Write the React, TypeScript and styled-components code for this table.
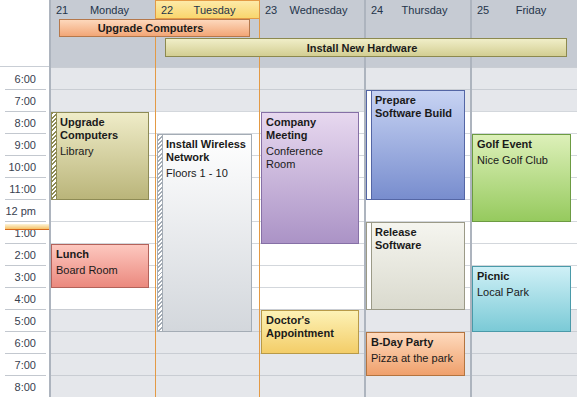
import React from 'react';
import styled, { createGlobalStyle, css } from 'styled-components';

const GlobalStyle = createGlobalStyle`
  html, body {
    margin: 0;
    padding: 0;
    background: #ffffff;
  }
  body {
    font-family: "Liberation Sans", Arial, sans-serif;
  }
`;

const GRID_COLS = '104px 105px 104px 106px 107px';
const HEADER_BG = '#c6cbd3';
const RAIL = '#adb4be';
const TODAY = '#e39a45';

type Edge = 'none' | 'grey' | 'today';

interface Day {
  num: string;
  name: string;
  edge: Edge;
  inset: number;
  evLeft: number;
  evRight: number;
  today?: boolean;
}

interface Tone {
  top: string;
  bottom: string;
  border: string;
}

interface CalEvent {
  day: number;
  start: number;
  end: number;
  title: string;
  location?: string;
  tone: Tone;
  strip?: 'hatch' | 'free';
}

const days: Day[] = [
  { num: '21', name: 'Monday', edge: 'none', inset: 0, evLeft: 0, evRight: 6 },
  { num: '22', name: 'Tuesday', edge: 'today', inset: 1, evLeft: 2, evRight: 8, today: true },
  { num: '23', name: 'Wednesday', edge: 'none', inset: 0, evLeft: 1, evRight: 5 },
  { num: '24', name: 'Thursday', edge: 'grey', inset: 2, evLeft: 2, evRight: 5 },
  { num: '25', name: 'Friday', edge: 'grey', inset: 2, evLeft: 2, evRight: 6 },
];

const hours = ['6:00', '7:00', '8:00', '9:00', '10:00', '11:00', '12 pm', '1:00', '2:00', '3:00', '4:00', '5:00', '6:00', '7:00', '8:00'];

const tones = {
  olive: { top: '#efecc8', bottom: '#bab57a', border: '#8e8b55' },
  red: { top: '#fdc8bf', bottom: '#eb897e', border: '#b3625a' },
  silver: { top: '#ffffff', bottom: '#d3d7dc', border: '#a4acb5' },
  purple: { top: '#e7d8ef', bottom: '#ab93c6', border: '#8670a6' },
  yellow: { top: '#fdf2b6', bottom: '#f3cd68', border: '#b89a48' },
  blue: { top: '#c7d3f3', bottom: '#788dce', border: '#5466a5' },
  beige: { top: '#f5f5ef', bottom: '#dadace', border: '#9b9a87' },
  orange: { top: '#fedabd', bottom: '#efa06c', border: '#b3743f' },
  green: { top: '#ddf0b9', bottom: '#96ca5e', border: '#6c9b42' },
  cyan: { top: '#cff0f6', bottom: '#7bcad6', border: '#4a9aa9' },
  allOrange: { top: '#fdd8bc', bottom: '#f2a676', border: '#b5784b' },
  allOlive: { top: '#f0eec8', bottom: '#d3ce92', border: '#8c894f' },
};

const events: CalEvent[] = [
  { day: 0, start: 2, end: 6, title: 'Upgrade Computers', location: 'Library', tone: tones.olive, strip: 'hatch' },
  { day: 0, start: 8, end: 10, title: 'Lunch', location: 'Board Room', tone: tones.red },
  { day: 1, start: 3, end: 12, title: 'Install Wireless Network', location: 'Floors 1 - 10', tone: tones.silver, strip: 'hatch' },
  { day: 2, start: 2, end: 8, title: 'Company Meeting', location: 'Conference Room', tone: tones.purple },
  { day: 2, start: 11, end: 13, title: "Doctor's Appointment", tone: tones.yellow },
  { day: 3, start: 1, end: 6, title: 'Prepare Software Build', tone: tones.blue, strip: 'free' },
  { day: 3, start: 7, end: 11, title: 'Release Software', tone: tones.beige, strip: 'free' },
  { day: 3, start: 12, end: 14, title: 'B-Day Party', location: 'Pizza at the park', tone: tones.orange },
  { day: 4, start: 3, end: 7, title: 'Golf Event', location: 'Nice Golf Club', tone: tones.green },
  { day: 4, start: 9, end: 12, title: 'Picnic', location: 'Local Park', tone: tones.cyan },
];

const isWorkHour = (i: number) => i >= 2 && i <= 10;

const Calendar = styled.div`
  width: 577px;
  height: 398px;
  overflow: hidden;
  display: grid;
  grid-template-columns: 51px ${GRID_COLS};
  grid-template-rows: 19px 48px repeat(15, 22px);
  font-size: 11px;
  color: #1b1b1b;
  background: #ffffff;
`;

const Corner = styled.div`
  grid-column: 1;
  grid-row: 1 / 3;
  border-bottom: 1px solid #c9ced5;
`;

const TimeRail = styled.div`
  grid-column: 1;
  grid-row: 1 / -1;
  border-right: 2px solid ${RAIL};
`;

const TimeCell = styled.div<{ $row: number; $first: boolean }>`
  grid-column: 1;
  grid-row: ${(p) => p.$row};
  margin: 0 5px;
  position: relative;
  display: flex;
  align-items: center;
  justify-content: flex-end;
  padding-right: 10px;
  border-top: 1px solid ${(p) => (p.$first ? 'transparent' : '#c3c8cf')};
  color: #38414f;
`;

const NowMarker = styled.div`
  position: absolute;
  left: 0;
  right: -3px;
  top: 2px;
  height: 6px;
  background: linear-gradient(to bottom, #fdf4d8 0, #f6c773 4.5px, #d8691c 4.5px, #d8691c 6px);
`;

const HeaderCell = styled.div<{ $col: number; $today?: boolean; $inset: number }>`
  grid-column: ${(p) => p.$col};
  grid-row: 1;
  display: flex;
  align-items: center;
  padding-left: ${(p) => 5 + p.$inset}px;
  color: #24344a;
  background: ${HEADER_BG};
  ${(p) =>
    p.$today &&
    css`
      background: linear-gradient(to bottom, #fdeaa8, #f9d66d);
      border-top: 1px solid ${TODAY};
      border-bottom: 1px solid ${TODAY};
    `}
`;

const DayNum = styled.span`
  width: 12px;
  flex-shrink: 0;
`;

const DayName = styled.span`
  flex: 1;
  text-align: center;
  padding-right: 4px;
`;

const AllDayCell = styled.div<{ $col: number }>`
  grid-column: ${(p) => p.$col};
  grid-row: 2;
  background: ${HEADER_BG};
`;

const Slot = styled.div<{ $col: number; $row: number; $work: boolean }>`
  grid-column: ${(p) => p.$col};
  grid-row: ${(p) => p.$row};
  background: ${(p) => (p.$work ? '#ffffff' : '#e5e7eb')};
  border-top: 1px solid ${(p) => (p.$work ? '#d3d7dc' : '#c9cdd3')};
`;

const DayRail = styled.div<{ $col: number; $edge: Edge }>`
  grid-column: ${(p) => p.$col};
  grid-row: 1 / -1;
  ${(p) =>
    p.$edge === 'grey' &&
    css`
      border-left: 2px solid ${RAIL};
    `}
  ${(p) =>
    p.$edge === 'today' &&
    css`
      border-left: 1px solid ${TODAY};
      border-right: 1px solid ${TODAY};
    `}
`;

const AllDayLane = styled.div`
  grid-column: 2 / 7;
  grid-row: 2;
  display: grid;
  grid-template-columns: ${GRID_COLS};
  grid-template-rows: 18px 19px;
  row-gap: 1px;
  align-content: start;
`;

const AllDayBar = styled.div<{ $from: number; $to: number; $row: number; $ml: number; $mr: number; $tone: Tone }>`
  grid-column: ${(p) => p.$from} / ${(p) => p.$to};
  grid-row: ${(p) => p.$row};
  margin: 0 ${(p) => p.$mr}px 0 ${(p) => p.$ml}px;
  padding-right: 8px;
  border: 1px solid ${(p) => p.$tone.border};
  background: linear-gradient(to bottom, ${(p) => p.$tone.top}, ${(p) => p.$tone.bottom});
  display: flex;
  align-items: center;
  justify-content: center;
  font-weight: bold;
  color: #1a1a1a;
`;

const EventBox = styled.div<{ $col: number; $start: number; $end: number; $ml: number; $mr: number; $tone: Tone }>`
  grid-column: ${(p) => p.$col};
  grid-row: ${(p) => p.$start} / ${(p) => p.$end};
  margin: 1px ${(p) => p.$mr}px -1px ${(p) => p.$ml}px;
  display: flex;
  overflow: hidden;
  border: 1px solid ${(p) => p.$tone.border};
  background: linear-gradient(to bottom, ${(p) => p.$tone.top}, ${(p) => p.$tone.bottom});
  z-index: 1;
`;

const Strip = styled.div<{ $kind: 'hatch' | 'free'; $color: string }>`
  width: 4px;
  flex-shrink: 0;
  border-right: 1px solid ${(p) => p.$color};
  background: ${(p) =>
    p.$kind === 'hatch'
      ? `repeating-linear-gradient(135deg, ${p.$color} 0, ${p.$color} 1.4px, #ffffff 1.4px, #ffffff 3px)`
      : '#ffffff'};
`;

const EventBody = styled.div<{ $strip: boolean }>`
  flex: 1;
  min-width: 0;
  padding: 3px 4px 0 ${(p) => (p.$strip ? 3 : 4)}px;
  color: #1a1a1a;
`;

const Title = styled.div`
  font-weight: bold;
  line-height: 13px;
`;

const Location = styled.div`
  margin-top: 3px;
  line-height: 13px;
`;

export default function App() {
  return (
    <>
      <GlobalStyle />
      <Calendar>
        <Corner />
        {hours.map((h, i) => (
          <TimeCell key={i} $row={3 + i} $first={i === 0}>
            {h}
            {i === 7 && <NowMarker />}
          </TimeCell>
        ))}
        <TimeRail />

        {days.map((d, di) => (
          <React.Fragment key={d.num}>
            <HeaderCell $col={di + 2} $today={d.today} $inset={d.inset}>
              <DayNum>{d.num}</DayNum>
              <DayName>{d.name}</DayName>
            </HeaderCell>
            <AllDayCell $col={di + 2} />
            {hours.map((_, i) => (
              <Slot key={i} $col={di + 2} $row={3 + i} $work={isWorkHour(i)} />
            ))}
            <DayRail $col={di + 2} $edge={d.edge} />
          </React.Fragment>
        ))}

        <AllDayLane>
          <AllDayBar $from={1} $to={3} $row={1} $ml={8} $mr={10} $tone={tones.allOrange}>
            Upgrade Computers
          </AllDayBar>
          <AllDayBar $from={2} $to={6} $row={2} $ml={10} $mr={10} $tone={tones.allOlive}>
            Install New Hardware
          </AllDayBar>
        </AllDayLane>

        {events.map((ev, i) => {
          const d = days[ev.day];
          return (
            <EventBox
              key={i}
              $col={ev.day + 2}
              $start={3 + ev.start}
              $end={3 + ev.end}
              $ml={d.evLeft}
              $mr={d.evRight}
              $tone={ev.tone}
            >
              {ev.strip && <Strip $kind={ev.strip} $color={ev.tone.border} />}
              <EventBody $strip={!!ev.strip}>
                <Title>{ev.title}</Title>
                {ev.location && <Location>{ev.location}</Location>}
              </EventBody>
            </EventBox>
          );
        })}
      </Calendar>
    </>
  );
}
